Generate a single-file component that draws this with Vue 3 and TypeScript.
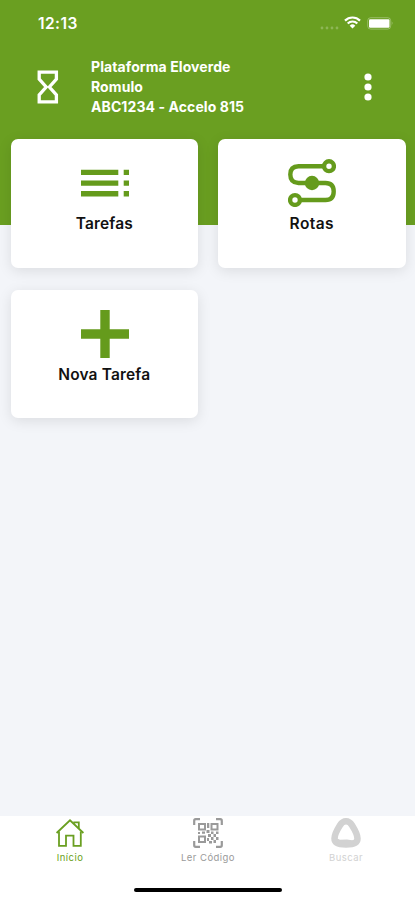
<script setup lang="ts">
interface Shortcut {
  id: 'tasks' | 'routes' | 'add'
  label: string
}

interface Tab {
  id: 'home' | 'scan' | 'search'
  label: string
}

const account: string[] = ['Plataforma Eloverde', 'Romulo', 'ABC1234 - Accelo 815']

const shortcuts: Shortcut[] = [
  { id: 'tasks', label: 'Tarefas' },
  { id: 'routes', label: 'Rotas' },
  { id: 'add', label: 'Nova Tarefa' },
]

const tabs: Tab[] = [
  { id: 'home', label: 'Início' },
  { id: 'scan', label: 'Ler Código' },
  { id: 'search', label: 'Buscar' },
]
</script>

<template>
  <div class="screen">
    <header class="header">
      <div class="status">
        <span class="clock">12:13</span>
        <div class="indicators">
          <svg class="signal" width="20" height="4" viewBox="0 0 20 4">
            <circle v-for="n in 4" :key="n" :cx="n * 5 - 3" cy="2" r="1.4" />
          </svg>
          <svg class="wifi" width="17" height="13" viewBox="0 0 17 13">
            <path d="M1 4.600a10.600 10.600 0 0 1 15 0M3.700 7.500a6.800 6.800 0 0 1 9.600 0" />
            <path class="wifi-dot" d="M5.700 9.700a4 4 0 0 1 5.600 0L8.500 12.500z" />
          </svg>
          <svg class="battery" width="27" height="13" viewBox="0 0 27 13">
            <rect class="battery-shell" x="0.7" y="0.7" width="23" height="11.4" rx="3" />
            <rect x="2" y="2.200" width="20.5" height="8.600" rx="1.2" />
            <path class="battery-tip" d="M24.8 4.3q1.8 2 0 4.2z" />
          </svg>
        </div>
      </div>
      <div class="account">
        <svg class="hourglass" width="22" height="34" viewBox="0 0 22 34">
          <path d="M2.2 2.2h17.200v7L12.400 17l7 7.8v7H2.200v-7L9.200 17 2.200 9.2z" />
        </svg>
        <div class="account-lines">
          <span v-for="line in account" :key="line">{{ line }}</span>
        </div>
        <svg class="more" width="8" height="28" viewBox="0 0 8 28">
          <circle cx="4" cy="4" r="3.6" />
          <circle cx="4" cy="14" r="3.6" />
          <circle cx="4" cy="24" r="3.6" />
        </svg>
      </div>
    </header>

    <main class="content">
      <div class="grid">
        <button v-for="item in shortcuts" :key="item.id" class="card" type="button">
          <svg v-if="item.id === 'tasks'" class="icon" viewBox="0 0 48 48">
            <path d="M0 10.700h37.300v5.300H0zM0 21.400h37.300v5.300H0zM0 32.100h37.300v5.300H0zM42.700 10.700H48V16h-5.300zM42.700 21.400H48v5.300h-5.300zM42.700 32.100H48v5.300h-5.300z" />
          </svg>
          <svg v-else-if="item.id === 'routes'" class="icon" viewBox="0 0 48 48">
            <g class="route">
              <path d="M36 7.200H10.500Q2.300 7.200 2.300 15.500T10.500 24h27Q45.700 24 45.700 32.500T37.500 41H12" />
              <circle cx="41" cy="7.200" r="4.900" />
              <circle cx="7" cy="41" r="4.900" />
            </g>
            <circle cx="24" cy="24" r="7.200" />
          </svg>
          <svg v-else class="icon" viewBox="0 0 48 48">
            <path d="M19.300 0h9.400v19.300H48v9.400H28.700V48h-9.400V28.700H0v-9.400h19.300z" />
          </svg>
          <span class="label" :class="item.id">{{ item.label }}</span>
        </button>
      </div>
    </main>

    <nav class="tabs">
      <div v-for="tab in tabs" :key="tab.id" class="tab" :class="tab.id">
        <svg v-if="tab.id === 'home'" class="tab-icon" viewBox="0 0 32 32">
          <g class="outline">
            <path d="M2.600 16 16 3.300 29.400 16" />
            <path d="M5 14.500V28.800h7V18.600h7.500v10.200h7.300V14.500" />
            <path d="M20.200 6.800V5.300h4.600v6" />
          </g>
        </svg>
        <svg v-else-if="tab.id === 'scan'" class="tab-icon" viewBox="0 0 32 32">
          <g class="brackets">
            <path d="M2.200 8V3.700Q2.200 2.200 3.700 2.200H8M24 2.200h4.300q1.500 0 1.500 1.500V8M29.800 24v4.300q0 1.500-1.500 1.500H24M8 29.800H3.700q-1.500 0-1.500-1.500V24" />
          </g>
          <g class="finders">
            <rect x="7" y="7" width="6" height="5.500" />
            <rect x="19.500" y="7" width="6" height="5.500" />
            <rect x="7" y="19.500" width="6" height="5.500" />
          </g>
          <path d="M15 6h2.300v5H15zM14.500 13h3v3h-3zM6 15h2v2H6zM10 14.500h3v2.300h-3zM19 14.500h2.500V17H19zM24 14.500h2.500V17H24zM16 17h3v3h-3zM21.500 17H24v3h-2.500zM19 20h2.500v3H19zM24 20h2.500v3H24zM15 21h2v3h-2zM17 24h3v2.500h-3zM21.500 23H24v3h-2.500z" />
        </svg>
        <svg v-else class="tab-icon" viewBox="0 0 32 32">
          <path class="ring" d="M16 4.300Q19.500 4.300 22 8.300Q27.500 17 27.500 21.500Q27.500 27.500 16 27.500T4.500 21.500Q4.500 17 10 8.300Q12.500 4.300 16 4.300z" />
          <path d="M6 21 10 22.800l7-.3 8 1.300-3 4H8z" />
        </svg>
        <span class="tab-label">{{ tab.label }}</span>
      </div>
      <div class="home-indicator"></div>
    </nav>
  </div>
</template>

<style>
body {
  background: #f3f5f9;
}
</style>

<style scoped>
.screen {
  display: flex;
  flex-direction: column;
  height: 900px;
  overflow: hidden;
  background: #f3f5f9;
  font-family: Inter, "Liberation Sans", sans-serif;
}

.header {
  box-sizing: border-box;
  flex: none;
  height: 225px;
  background: #6a9f21;
  color: #fff;
}

.status {
  display: flex;
  align-items: center;
  justify-content: space-between;
  height: 46px;
  padding: 0 21px 0 38px;
}

.clock {
  font-size: 15.5px;
  font-weight: 600;
  letter-spacing: 0.45px;
}

.indicators {
  display: flex;
  align-items: center;
  fill: #fff;
}

.signal {
  margin: 9px 4px 0 0;
  opacity: 0.24;
}

.wifi {
  margin: 0 6px 1px 0;
}

.wifi path {
  fill: none;
  stroke: #fff;
  stroke-width: 2.2;
}

.wifi .wifi-dot {
  fill: #fff;
  stroke: none;
}

.battery-shell {
  fill: none;
  stroke: #fff;
  stroke-opacity: 0.3;
}

.battery-tip {
  fill-opacity: 0.4;
}

.account {
  display: flex;
  align-items: center;
  height: 82px;
  padding: 0 43px 0 37px;
}

.hourglass {
  margin-right: 32px;
  fill: none;
  stroke: #fff;
  stroke-width: 3.3;
}

.account-lines {
  display: flex;
  flex: 1;
  flex-direction: column;
  font-size: 14px;
  font-weight: 700;
  line-height: 20px;
  letter-spacing: 0.09px;
  white-space: nowrap;
}

.more {
  fill: #fff;
}

.content {
  flex: 1;
}

.grid {
  display: grid;
  grid-template-columns: 1fr 1fr;
  gap: 22px 20px;
  margin-top: -86px;
  padding: 0 9.500px 0 10.500px;
}

.card {
  display: flex;
  flex-direction: column;
  align-items: center;
  height: 128.500px;
  padding: 20px 0 0;
  border: 0;
  border-radius: 7px;
  background: #fff;
  box-shadow: 0 3px 14px rgba(0, 0, 0, 0.1);
  color: #111;
  font-family: inherit;
}

.icon {
  width: 48px;
  height: 48px;
  margin-left: 1px;
  fill: #659b1c;
}

.route {
  fill: none;
  stroke: #659b1c;
  stroke-width: 4.4;
}

.label {
  margin-top: 7px;
  font-size: 15.5px;
  font-weight: 600;
  line-height: 20px;
  letter-spacing: 0.15px;
}

.label.routes {
  letter-spacing: 0.4px;
}

.tabs {
  display: grid;
  flex: none;
  grid-template-columns: repeat(3, 1fr);
  grid-template-rows: 71.500px 12.500px;
  height: 84px;
  padding-left: 1px;
  background: #fff;
}

.tab {
  display: flex;
  flex-direction: column;
  align-items: center;
  padding-top: 1px;
  color: #9a9a9a;
  fill: currentColor;
}

.tab.home {
  color: #6a9f21;
}

.tab.search {
  color: #d2d2d2;
}

.tab-icon {
  width: 32px;
  height: 32px;
}

.outline,
.brackets,
.finders,
.ring {
  fill: none;
  stroke: currentColor;
}

.outline {
  stroke-width: 1.8;
}

.brackets {
  stroke-width: 2.2;
}

.finders {
  stroke-width: 2;
}

.ring {
  stroke-width: 6.5;
}

.tab-label {
  margin-top: 3px;
  font-size: 9.5px;
  line-height: 12px;
  letter-spacing: 0.45px;
}

.home-indicator {
  grid-column: 1 / -1;
  justify-self: center;
  width: 148px;
  height: 4.500px;
  border-radius: 3px;
  background: #000;
}
</style>
